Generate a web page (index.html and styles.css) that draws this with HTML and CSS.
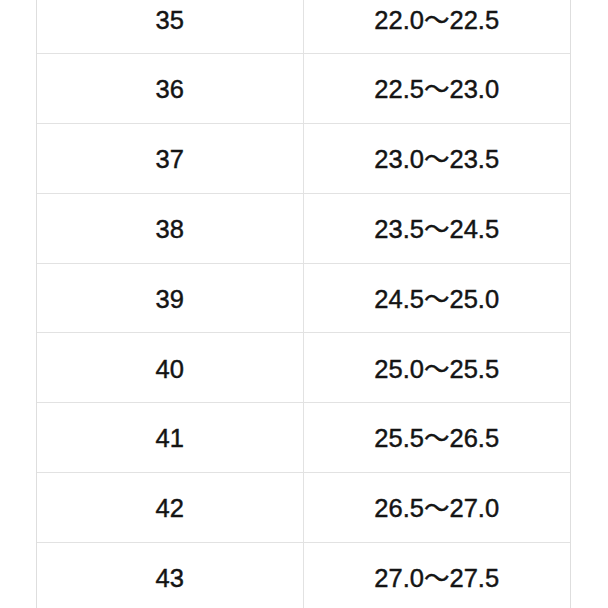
FILE: index.html
```html
<!DOCTYPE html>
<html lang="zh">
<head>
<meta charset="utf-8">
<link rel="stylesheet" href="styles.css">
<title>Size chart</title>
</head>
<body>
<div class="sheet">
  <div class="table">
    <div class="row"><div class="cell">35</div><div class="cell">22.0～22.5</div></div>
    <div class="row"><div class="cell">36</div><div class="cell">22.5～23.0</div></div>
    <div class="row"><div class="cell">37</div><div class="cell">23.0～23.5</div></div>
    <div class="row"><div class="cell">38</div><div class="cell">23.5～24.5</div></div>
    <div class="row"><div class="cell">39</div><div class="cell">24.5～25.0</div></div>
    <div class="row"><div class="cell">40</div><div class="cell">25.0～25.5</div></div>
    <div class="row"><div class="cell">41</div><div class="cell">25.5～26.5</div></div>
    <div class="row"><div class="cell">42</div><div class="cell">26.5～27.0</div></div>
    <div class="row"><div class="cell">43</div><div class="cell">27.0～27.5</div></div>
  </div>
</div>
</body>
</html>
```
FILE: styles.css
```css
html, body {
  margin: 0;
  padding: 0;
  background: #ffffff;
}
body {
  width: 608px;
  height: 608px;
  overflow: hidden;
  font-family: "Liberation Sans", "Noto Sans CJK SC", sans-serif;
  color: #141414;
}
.sheet {
  padding-left: 36px;
}
.table {
  width: 535px;
  margin-top: -15.5px;
  border-left: 1.5px solid #dedede;
  border-right: 1.5px solid #dedede;
  box-sizing: border-box;
}
.row {
  display: grid;
  grid-template-columns: 1fr 1fr;
  height: 69.8px;
  box-sizing: border-box;
  border-bottom: 1.5px solid #e2e2e2;
}
.cell {
  display: flex;
  align-items: center;
  justify-content: center;
  font-size: 25.5px;
  line-height: 1;
  padding-top: 3px;
  -webkit-text-stroke: 0.45px #141414;
}
.cell:first-child {
  border-right: 1.5px solid #e2e2e2;
}
```
